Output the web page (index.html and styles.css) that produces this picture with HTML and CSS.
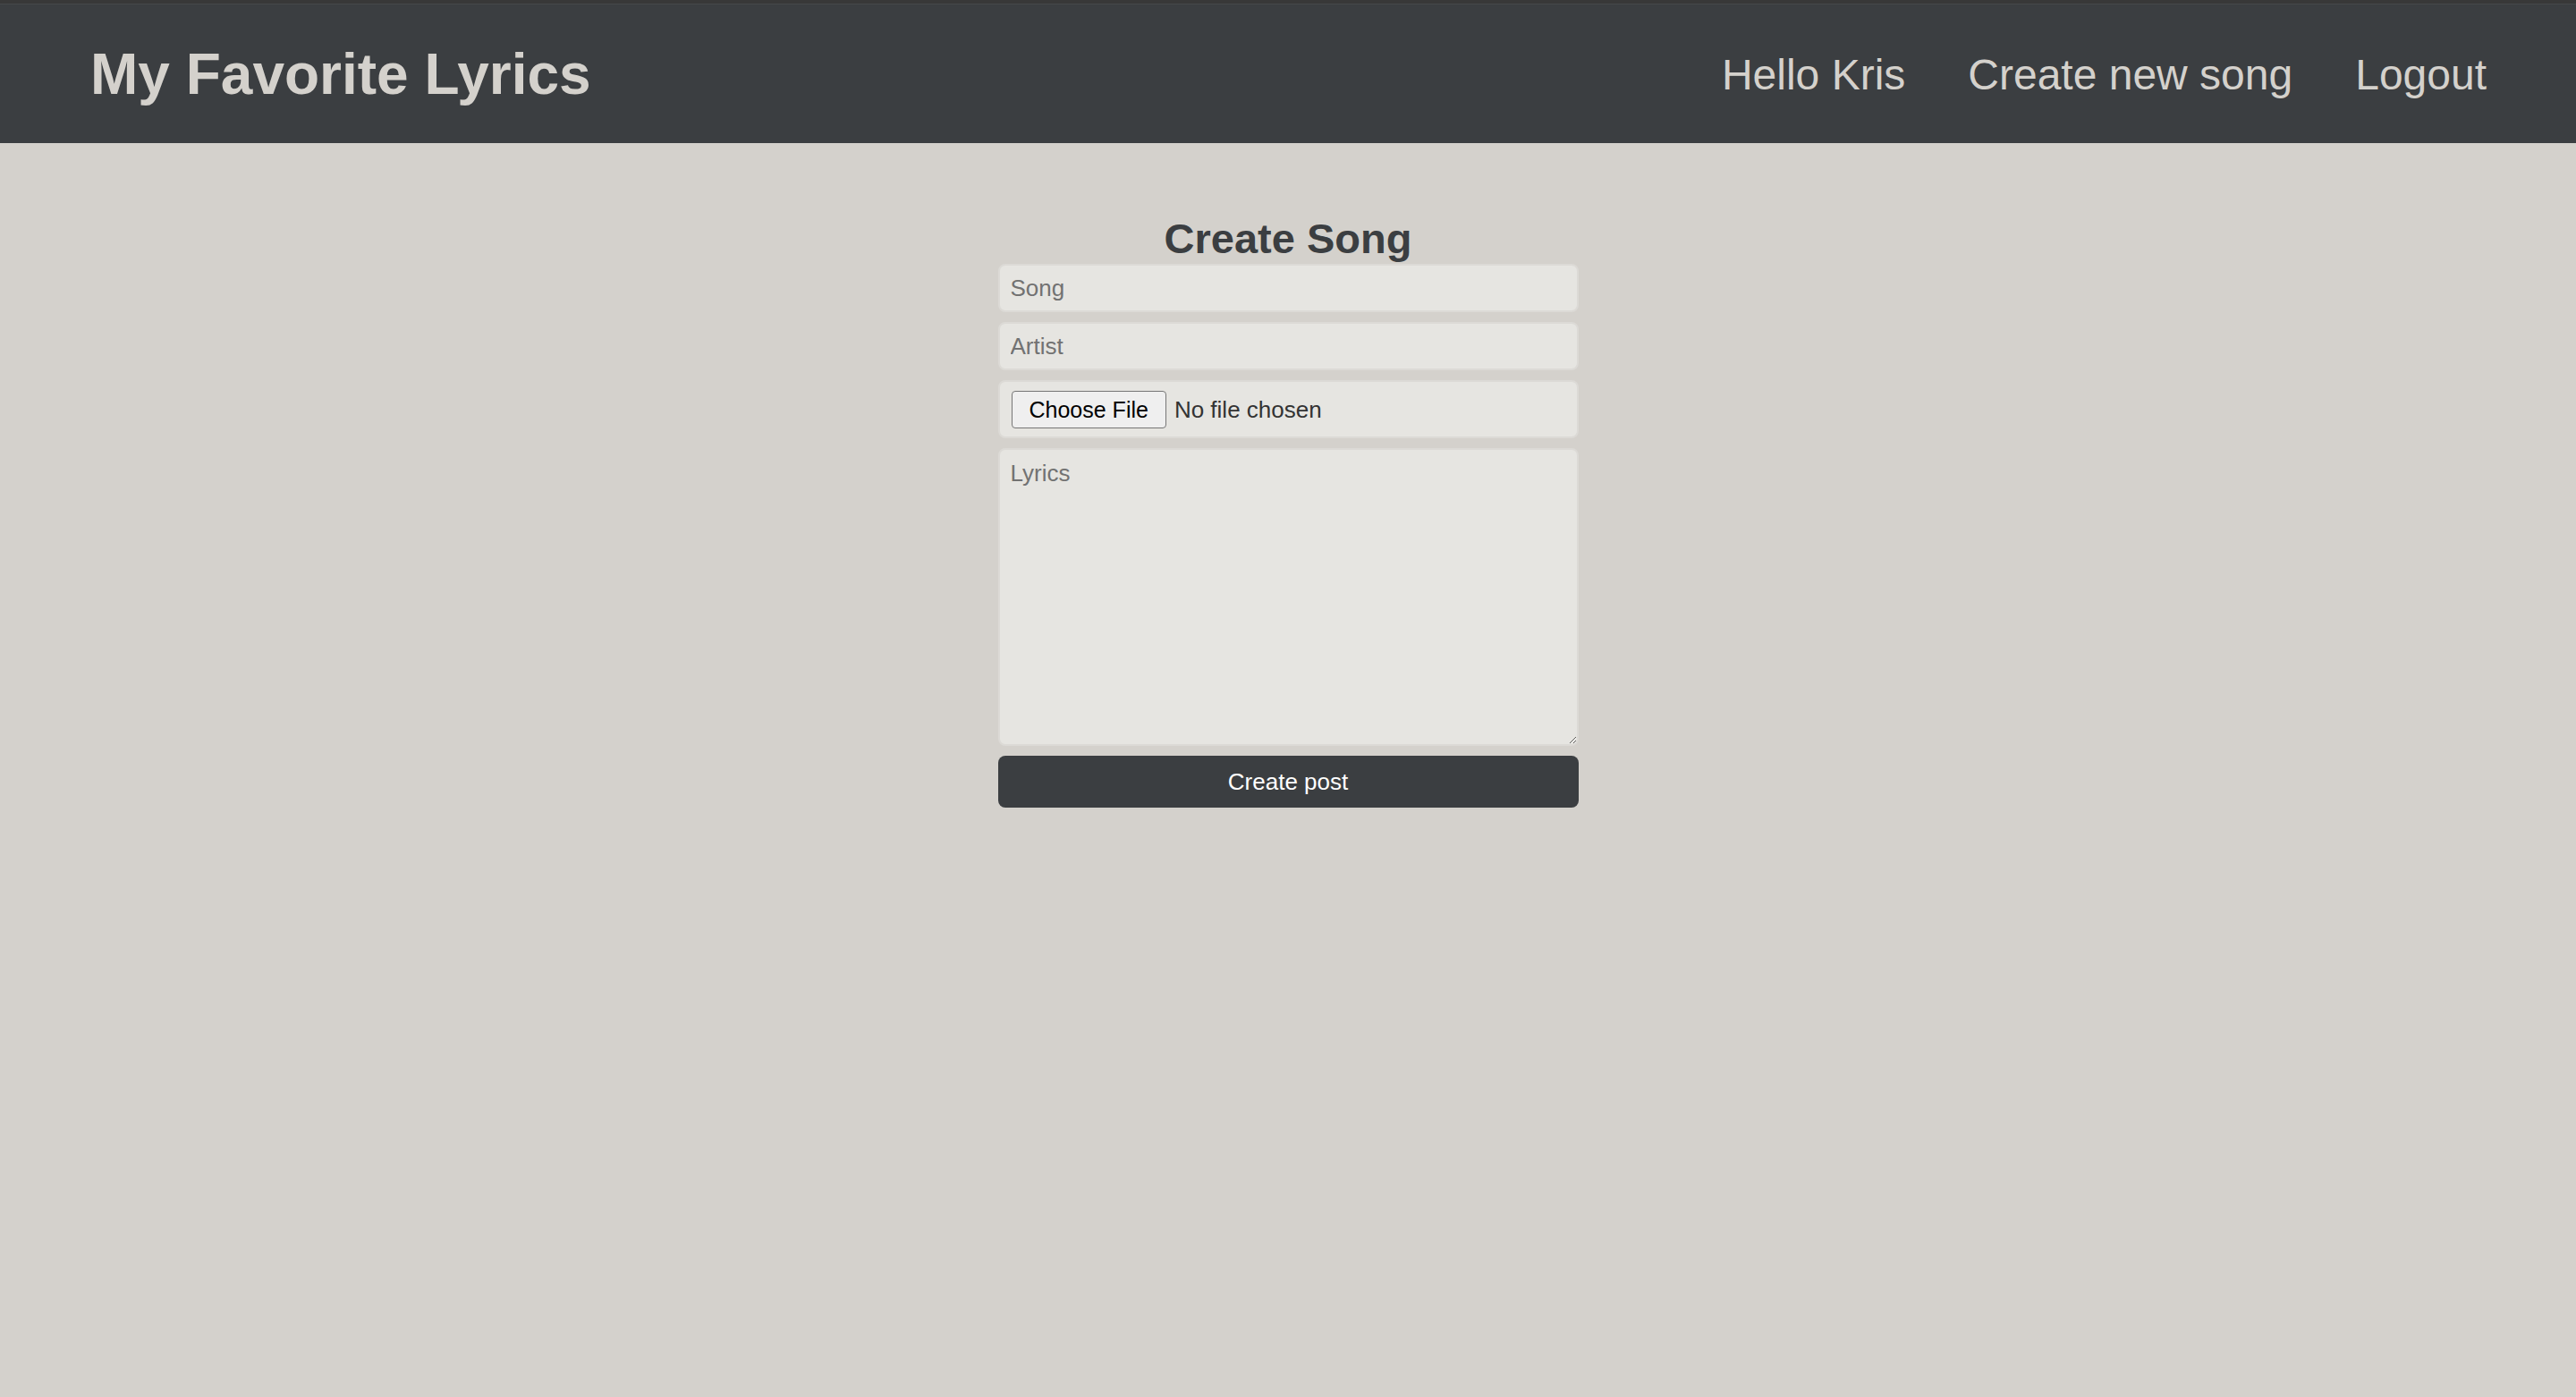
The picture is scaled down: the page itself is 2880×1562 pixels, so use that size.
FILE: index.html
```html
<!DOCTYPE html>
<html lang="en">
<head>
<meta charset="utf-8">
<title>My Favorite Lyrics</title>
<link rel="stylesheet" href="styles.css">
</head>
<body>
<header class="site-header">
  <a class="brand" href="#">My Favorite Lyrics</a>
  <nav class="nav">
    <a class="nav-link" href="#">Hello Kris</a>
    <a class="nav-link" href="#">Create new song</a>
    <a class="nav-link" href="#">Logout</a>
  </nav>
</header>
<main class="main">
  <form class="song-form">
    <h1 class="form-title">Create Song</h1>
    <input class="field" type="text" placeholder="Song">
    <input class="field" type="text" placeholder="Artist">
    <input class="field file-field" type="file">
    <textarea class="field lyrics" placeholder="Lyrics"></textarea>
    <button class="submit" type="button">Create post</button>
  </form>
</main>
</body>
</html>
```
FILE: styles.css
```css
* { box-sizing: border-box; }

html, body {
  margin: 0;
  padding: 0;
}

body {
  background: #d4d1cc;
  min-height: 100vh;
  font-family: "Liberation Sans", Arial, Helvetica, sans-serif;
}

.site-header {
  height: 160px;
  background: #3b3e41;
  border-top: 4px solid #383838;
  box-shadow: inset 0 1px 0 #46484a;
  display: flex;
  align-items: center;
  justify-content: space-between;
  padding: 2px 100px 0 101px;
}

.brand {
  font-size: 64px;
  font-weight: bold;
  color: #d4d1cc;
  text-decoration: none;
  line-height: normal;
}

.nav {
  display: flex;
  align-items: center;
  gap: 70px;
}

.nav-link {
  font-size: 48px;
  color: #d4d1cc;
  text-decoration: none;
  line-height: normal;
}

.main {
  display: flex;
  justify-content: center;
  padding-top: 79px;
}

.song-form {
  width: 649px;
  display: flex;
  flex-direction: column;
  gap: 11px;
}

.form-title {
  margin: 0 0 -10px;
  text-align: center;
  font-size: 47px;
  font-weight: bold;
  color: #3b3e41;
  line-height: normal;
}

.field {
  display: block;
  width: 100%;
  height: 54px;
  margin: 0;
  padding: 0 12px;
  border: 2px solid #dcdad6;
  border-radius: 8px;
  background: #e6e5e1;
  font-family: "Liberation Sans", Arial, Helvetica, sans-serif;
  font-size: 26px;
  color: #222;
  outline: none;
}

.field::placeholder {
  color: #727272;
}

.file-field {
  height: 65px;
  padding: 10px 13px 9px;
  font-size: 26px;
  color: #333;
}

.file-field::file-selector-button {
  font-family: "Liberation Sans", Arial, Helvetica, sans-serif;
  font-size: 25px;
  height: 42px;
  padding: 0 19px;
  margin-right: 9px;
  border: 1px solid #767676;
  border-radius: 4px;
  background: #efefef;
  color: #000;
}

.lyrics {
  height: 333px;
  padding: 11px 12px 9px;
  resize: both;
  line-height: normal;
}

.submit {
  display: block;
  width: 100%;
  height: 58px;
  margin: 0;
  border: none;
  border-radius: 8px;
  background: #3b3e41;
  color: #ffffff;
  font-family: "Liberation Sans", Arial, Helvetica, sans-serif;
  font-size: 26px;
  cursor: pointer;
}
```
